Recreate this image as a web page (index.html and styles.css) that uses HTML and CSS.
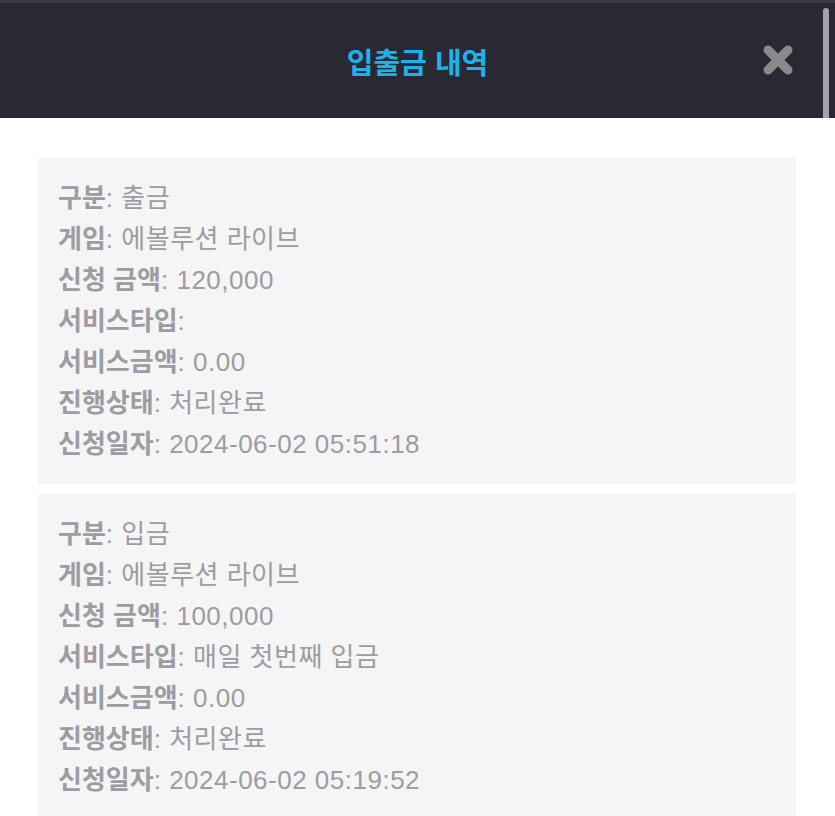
FILE: index.html
```html
<!DOCTYPE html>
<html lang="ko">
<head>
<meta charset="UTF-8">
<meta name="viewport" content="width=device-width, initial-scale=1.0">
<title>입출금 내역</title>
<link rel="stylesheet" href="styles.css">
</head>
<body>
<div class="modal">
  <div class="topline"></div>
  <header class="header">
    <h1>입출금 내역</h1>
    <button class="close" aria-label="닫기">
      <svg width="34" height="34" viewBox="0 0 34 34"><path d="M7 7 L27 27 M27 7 L7 27" stroke="#8a8a8a" stroke-width="9" stroke-linecap="round"/></svg>
    </button>
    <div class="thumb"></div>
  </header>
  <div class="list">
    <div class="card">
      <p><b>구분</b>: 출금</p>
      <p><b>게임</b>: 에볼루션 라이브</p>
      <p><b>신청 금액</b>: 120,000</p>
      <p><b>서비스타입</b>: </p>
      <p><b>서비스금액</b>: 0.00</p>
      <p><b>진행상태</b>: 처리완료</p>
      <p><b>신청일자</b>: 2024-06-02 05:51:18</p>
    </div>
    <div class="card">
      <p><b>구분</b>: 입금</p>
      <p><b>게임</b>: 에볼루션 라이브</p>
      <p><b>신청 금액</b>: 100,000</p>
      <p><b>서비스타입</b>: 매일 첫번째 입금</p>
      <p><b>서비스금액</b>: 0.00</p>
      <p><b>진행상태</b>: 처리완료</p>
      <p><b>신청일자</b>: 2024-06-02 05:19:52</p>
    </div>
  </div>
</div>
</body>
</html>
```
FILE: styles.css
```css
:root {
  --header-bg: #2a2833;
  --title: #1bb3ef;
  --card-bg: #f5f5f5;
  --text: #9c9ca2;
}
body { margin: 0; background: #fff; font-family: "Noto Sans CJK KR", "Noto Sans", sans-serif; overflow: hidden; }
.modal { width: 835px; height: 816px; }
.topline { height: 3px; background: #3b3a40; }
.header { position: relative; height: 115px; background: var(--header-bg); display: flex; align-items: center; justify-content: center; }
.header h1 { margin: 0; color: var(--title); font-size: 29px; font-weight: 700; }
.close { position: absolute; right: 40px; top: 40px; background: none; border: none; padding: 0; width: 34px; height: 34px; cursor: pointer; }
.close svg { display: block; }
.thumb { position: absolute; right: 6px; top: 5px; width: 6px; height: 110px; border-radius: 3px 3px 0 0; background: #a3a3a8; }
.list { padding: 40px 39px 0 38px; display: flex; flex-direction: column; gap: 10px; }
.card { background: var(--card-bg); padding: 20px 20px 19px; }
.card p { margin: 0; height: 41px; line-height: 41px; font-size: 26px; color: var(--text); letter-spacing: 0.5px; white-space: nowrap; font-family: "Liberation Sans", "Noto Sans CJK KR", sans-serif; }
.card b { font-weight: 700; line-height: 1; letter-spacing: 0; font-family: "Noto Sans CJK KR", sans-serif; }
```
